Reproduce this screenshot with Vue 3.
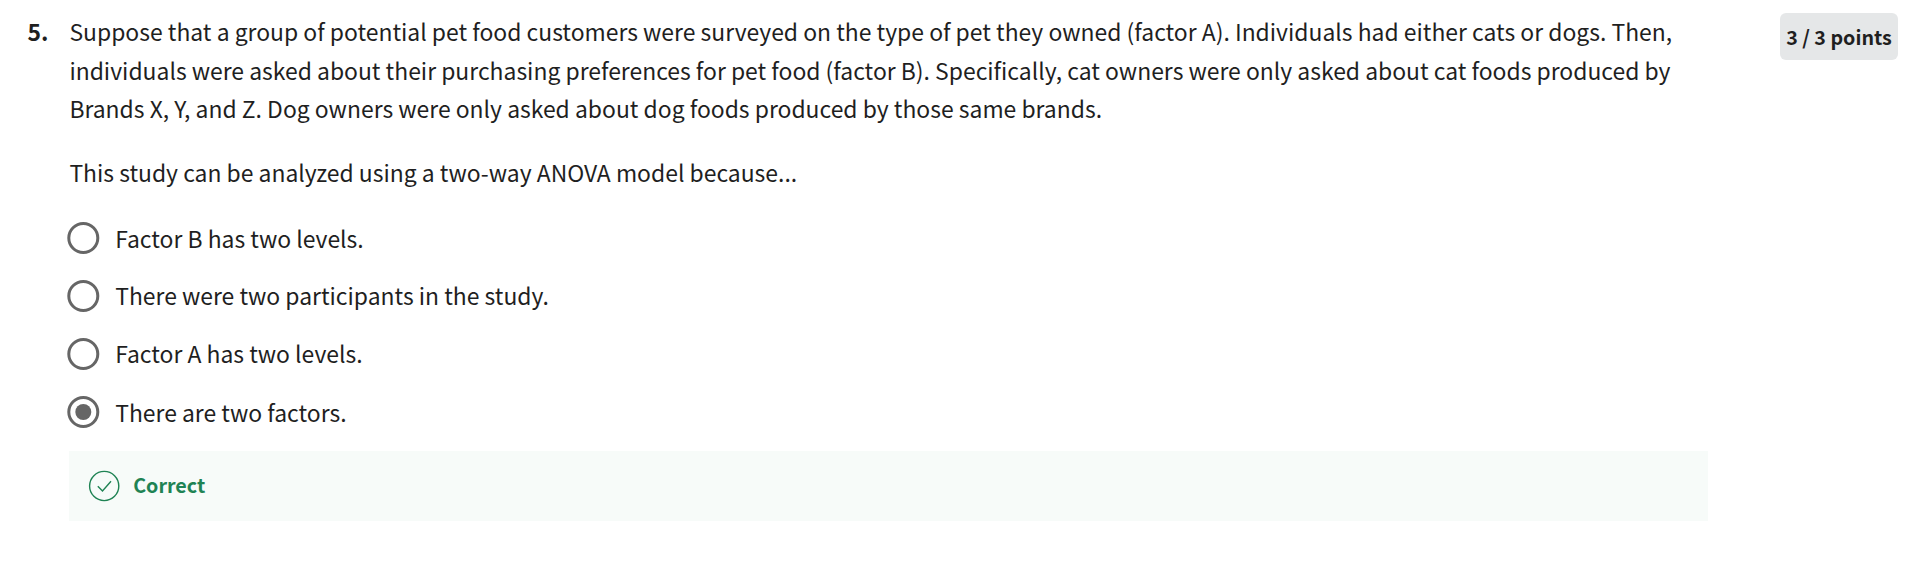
<script setup>
const options = [
  { text: 'Factor B has two levels.', selected: false },
  { text: 'There were two participants in the study.', selected: false },
  { text: 'Factor A has two levels.', selected: false },
  { text: 'There are two factors.', selected: true },
]
</script>

<template>
  <main class="question">
    <span class="number">5.</span>
    <section class="body">
      <p>
        Suppose that a group of potential pet food customers were surveyed on the type of pet they owned (factor A). Individuals had either cats or dogs. Then,<br />
        individuals were asked about their purchasing preferences for pet food (factor B). Specifically, cat owners were only asked about cat foods produced by<br />
        Brands X, Y, and Z. Dog owners were only asked about dog foods produced by those same brands.
      </p>
      <p class="prompt">This study can be analyzed using a two-way ANOVA model because...</p>
      <ul class="options">
        <li v-for="option in options" :key="option.text" class="option">
          <svg class="radio" width="33" height="32" viewBox="0 0 33 32">
            <circle cx="16.3" cy="16" r="14.5" fill="none" stroke="#666" stroke-width="3" />
            <circle v-if="option.selected" cx="16.3" cy="16" r="8" fill="#666" />
          </svg>
          <span class="label">{{ option.text }}</span>
        </li>
      </ul>
      <div class="feedback">
        <svg width="32" height="32" viewBox="0 0 32 32" fill="none" stroke="#1f8354" stroke-width="1.4">
          <circle cx="16.2" cy="16" r="14.6" />
          <path d="M9.8 16.2 L14.5 21 L23 11.2" />
        </svg>
        <strong>Correct</strong>
      </div>
    </section>
    <span class="points">3 / 3 points</span>
  </main>
</template>

<style>
body { background: #fff; }
</style>

<style scoped>
.question {
  display: flex;
  align-items: flex-start;
  box-sizing: border-box;
  height: 563px;
  padding: 12px 18px 0 27px;
  color: #1f1f1f;
  font-family: "Noto Sans CJK JP", "Noto Sans", sans-serif;
  font-size: 22.91px;
  line-height: 38.5px;
}
.number { box-sizing: border-box; width: 42px; padding-left: 0.4px; font-weight: 700; }
.body { width: 1639px; }
p { margin: 0; padding-left: 0.4px; white-space: nowrap; }
.prompt { margin-top: 25px; }
.options {
  display: grid;
  grid-template-rows: 58px 57.3px 58.5px 58.1px;
  margin: 18px 0 0;
  padding: 0;
  list-style: none;
}
.option { display: flex; align-items: center; gap: 15.2px; margin-left: -2px; }
.radio { flex: none; }
.feedback {
  display: flex;
  align-items: center;
  gap: 13.2px;
  box-sizing: border-box;
  height: 70px;
  margin-top: 10.1px;
  padding-left: 19px;
  background: #f7fbf9;
  color: #1f8354;
  font-size: 19.7px;
}
.feedback strong { padding-bottom: 2px; }
.points {
  box-sizing: border-box;
  width: 118px;
  height: 47px;
  margin: 1px 0 0 auto;
  border-radius: 6px;
  background: #e5e7e8;
  font-size: 19.7px;
  font-weight: 700;
  line-height: 47px;
  text-align: center;
}
</style>
